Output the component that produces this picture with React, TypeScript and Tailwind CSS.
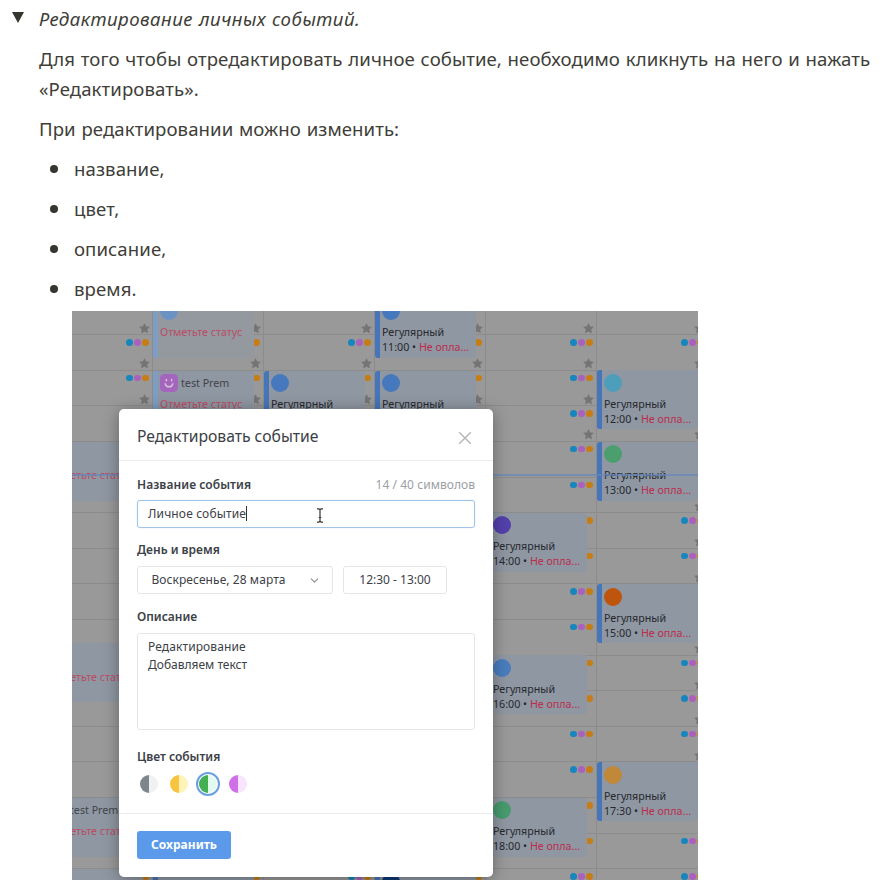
import React from 'react';
import { ChevronDown } from 'lucide-react';

const SLOTS = Array.from({ length: 18 }, (_, i) => i);

type CalendarEvent = {
  top: number;
  bar?: string;
  body?: string;
  avatar?: string;
  smile?: boolean;
  name?: string;
  time?: string;
  status?: boolean;
};

const BLUE = 'bg-[#4676b9]';
const PALE = 'bg-[#7e9dc5]';

const COLUMNS: CalendarEvent[][] = [
  [
    { top: 143, status: true },
    { top: 344.5, status: true },
    { top: 499, status: true, name: 'test Prem' },
    { top: 570.5 },
  ],
  [
    { top: 0, bar: PALE, body: 'bg-[#93999e]', avatar: 'bg-[#6a93c4]', status: true },
    { top: 72, bar: PALE, smile: true, name: 'test Prem', status: true },
    { top: 570.5, bar: BLUE },
  ],
  [{ top: 72, bar: BLUE, avatar: 'bg-[#4678bd]', time: '12:00' }],
  [
    { top: 0, bar: BLUE, avatar: 'bg-[#4678bd]', time: '11:00' },
    { top: 72, bar: BLUE, avatar: 'bg-[#4678bd]', time: '12:00' },
    { top: 570.5, bar: BLUE, avatar: 'bg-[#0c3a77]' },
  ],
  [
    { top: 214, bar: BLUE, avatar: 'bg-[#5340ab]', time: '14:00' },
    { top: 356.5, bar: BLUE, avatar: 'bg-[#4a7dbe]', time: '16:00' },
    { top: 499, bar: BLUE, avatar: 'bg-[#479b6e]', time: '18:00' },
  ],
  [
    { top: 71.5, bar: BLUE, avatar: 'bg-[#4d9ebb]', time: '12:00' },
    { top: 143, bar: BLUE, avatar: 'bg-[#4b9e6e]', time: '13:00' },
    { top: 285.5, bar: BLUE, avatar: 'bg-[#bf540d]', time: '15:00' },
    { top: 463.5, bar: BLUE, avatar: 'bg-[#c08838]', time: '17:30' },
  ],
];

function Star() {
  return (
    <svg viewBox="0 0 12 12" className="h-[11px] w-[11px] fill-[#747474] stroke-[#747474]" strokeWidth="0.8" strokeLinejoin="round">
      <path d="M6 .9 7.5 4l3.7.5-2.7 2.5.7 3.7L6 8.9l-3.2 1.8.7-3.7L.8 4.5 4.5 4z" />
    </svg>
  );
}

function Slot({ star }: { star: boolean }) {
  return (
    <div className="flex h-[35.62px] shrink-0 flex-col items-end justify-between border-t border-[#8c8c8c] pt-[4px] pr-[3px]">
      <div className="flex gap-[1.5px]">
        <i className="size-[6.5px] rounded-full bg-[#1686bd]" />
        <i className="size-[6.5px] rounded-full bg-[#ac60bd]" />
        <i className="size-[6.5px] rounded-full bg-[#c67d15]" />
      </div>
      <div className="-mr-[1.5px] h-[11.5px]">{star && <Star />}</div>
    </div>
  );
}

function EventCard({ event }: { event: CalendarEvent }) {
  return (
    <div
      className={`absolute left-0 flex h-[59px] w-[101px] overflow-hidden rounded-[3px] text-[10.7px] leading-[15px] text-[#26292e] ${event.body ?? 'bg-[#8f97a2]'}`}
      style={{ top: event.top }}
    >
      <div className={`w-[5px] shrink-0 ${event.bar ?? PALE}`} />
      <div className="flex w-[96px] shrink-0 flex-col pl-[2.5px] pt-[3.5px] whitespace-nowrap">
        <div className="flex h-[18px] items-center gap-[3px]">
          {event.smile ? (
            <svg viewBox="0 0 18 18" className="size-[18px]">
              <rect width="18" height="18" rx="4.5" fill="#a466bd" />
              <path d="M5.2 9.8a3.9 3.9 0 0 0 7.6 0M6.4 5.6v1.2M11.6 5.6v1.2" fill="none" stroke="#d3c2da" strokeWidth="1.5" strokeLinecap="round" />
            </svg>
          ) : (
            <i className={`size-[18px] rounded-full ${event.avatar ?? ''}`} />
          )}
          {event.name && <span className="text-[#414449]">{event.name}</span>}
        </div>
        {event.status && <span className="pt-[5px] text-[#bb4c66]">Отметьте статус</span>}
        {event.time && (
          <>
            <span className="pt-[5px]">Регулярный</span>
            <span>
              {event.time} • <span className="text-[#bb2e4e]">Не опла...</span>
            </span>
          </>
        )}
      </div>
    </div>
  );
}

function Calendar() {
  return (
    <div className="-ml-[30.5px] -mt-[12.5px] flex w-[666px]">
      {COLUMNS.map((events, c) => (
        <div key={c} className="relative w-[111px] shrink-0 border-r border-[#8c8c8c]">
          {SLOTS.map((r) => (
            <Slot key={r} star={c === 5 ? r < 13 : r < 4} />
          ))}
          {events.map((event) => (
            <EventCard key={event.top} event={event} />
          ))}
        </div>
      ))}
    </div>
  );
}

function Swatch({ left, right, selected }: { left: string; right: string; selected?: boolean }) {
  return (
    <div className={`flex size-6 items-center justify-center rounded-full ${selected ? 'border-2 border-[#6a9fe0]' : ''}`}>
      <div className="flex size-[18px] shrink-0 overflow-hidden rounded-full">
        <i className={`w-1/2 ${left}`} />
        <i className={`w-1/2 ${right}`} />
      </div>
    </div>
  );
}

function EventDialog() {
  return (
    <div className="absolute left-[47px] top-[98px] flex h-[468px] w-[374px] flex-col rounded-[5px] bg-white text-[12px] text-[#3c4147] shadow-[0_2px_16px_rgba(0,0,0,0.35)]">
      <div className="flex h-[52px] shrink-0 items-center justify-between border-b border-[#e9ebec] px-[18px] pt-[4px]">
        <h2 className="text-[15.7px]">Редактировать событие</h2>
        <svg viewBox="0 0 12 12" className="mr-[4px] mt-[2px] size-[12px] overflow-visible stroke-[#b5b8ba]" strokeWidth="1.5">
          <path d="M.2.2l11.6 11.6M11.8.2l-11.6 11.6" />
        </svg>
      </div>
      <div className="flex h-[353px] shrink-0 flex-col border-b border-[#e9ebec] px-[18px]">
        <div className="mt-[15px] flex h-[18px] items-center justify-between">
          <span className="font-semibold tracking-[0.07px]">Название события</span>
          <span className="tracking-[0.05px] text-[#9ba0a4]">14 / 40 символов</span>
        </div>
        <div className="mt-[5.5px] flex h-[28px] items-center justify-between rounded-[3px] border-[1.5px] border-[#a0c4e8] pl-[10px] pr-[150px] shadow-[0_0_1px_#a0c4e8]">
          <span className="border-r border-[#333] leading-[15px] tracking-[0.15px]">Личное событие</span>
          <svg viewBox="0 0 8 15" className="mt-[4px] h-[15px] w-[8px] fill-none stroke-[#333]" strokeWidth="1.2">
            <path d="M1 .8h2l1 1 1-1h2M4 1.5v12M1 14.2h2l1-1 1 1h2M2.8 9.5h2.4" />
          </svg>
        </div>
        <span className="mt-[13.5px] h-[18px] font-semibold leading-[18px]">День и время</span>
        <div className="mt-[7px] flex h-[28px] gap-[10px]">
          <div className="flex w-[196px] items-center justify-between rounded-[3px] border border-[#e4e7e9] pl-[13.5px] pr-[11px]">
            <span className="tracking-[0.07px]">Воскресенье, 28 марта</span>
            <ChevronDown size={13} color="#8b8f93" />
          </div>
          <div className="flex w-[104px] items-center justify-center rounded-[3px] border border-[#e4e7e9]">12:30 - 13:00</div>
        </div>
        <span className="mt-[14px] h-[18px] font-semibold leading-[18px]">Описание</span>
        <div className="mt-[7px] h-[97px] rounded-[3px] border border-[#e4e7e9] px-[10px] pt-[4px] leading-[17.5px]">
          <span className="tracking-[0.1px]">Редактирование</span>
          <br />
          Добавляем текст
        </div>
        <span className="mt-[18px] h-[18px] font-semibold leading-[18px]">Цвет события</span>
        <div className="mt-[6px] flex gap-[5.5px]">
          <Swatch left="bg-[#7d868c]" right="bg-[#eff1f2]" />
          <Swatch left="bg-[#f8c33f]" right="bg-[#fff3b8]" />
          <Swatch left="bg-[#43b053]" right="bg-[#e3fbef]" selected />
          <Swatch left="bg-[#cf70ea]" right="bg-[#f8e4fd]" />
        </div>
      </div>
      <div className="flex px-[18px] pt-[17px]">
        <button className="h-[28px] w-[94px] rounded-[3px] bg-[#5b9aea] text-[12px] font-bold text-white">Сохранить</button>
      </div>
    </div>
  );
}

export default function App() {
  return (
    <main className="h-[880px] w-[883px] overflow-hidden bg-white font-['Noto_Sans','Open_Sans',sans-serif] text-[#403e39]">
      <div className="flex pt-[4px] text-[18.6px] leading-[30px] tracking-[0.08px] [word-spacing:0.8px]">
        <div className="w-[39px] shrink-0 pl-[11.5px] pt-[8px]">
          <svg viewBox="0 0 12 11" className="h-[11px] w-[12px] fill-[#37352f]">
            <path d="M0 0h12L6 11z" />
          </svg>
        </div>
        <div className="flex w-[844px] shrink-0 flex-col gap-[10px]">
          <p className="italic tracking-[0.46px]">Редактирование личных событий.</p>
          <p className="whitespace-nowrap">
            Для того чтобы отредактировать личное событие, необходимо кликнуть на него и нажать
            <br />
            «Редактировать».
          </p>
          <p>При редактировании можно изменить:</p>
          {['название,', 'цвет,', 'описание,', 'время.'].map((item) => (
            <div key={item} className="flex items-center pl-[11px]">
              <i className="mr-[16px] size-[8px] rounded-full bg-[#37352f]" />
              <span>{item}</span>
            </div>
          ))}
        </div>
      </div>
      <div className="relative ml-[72px] mt-[7px] h-[569px] w-[626px] overflow-hidden bg-[#999999] font-['Noto_Sans','Open_Sans',sans-serif]">
        <Calendar />
        <div className="absolute left-0 top-[163px] h-[2px] w-full bg-[#6688bb]/70" />
        <EventDialog />
      </div>
    </main>
  );
}
